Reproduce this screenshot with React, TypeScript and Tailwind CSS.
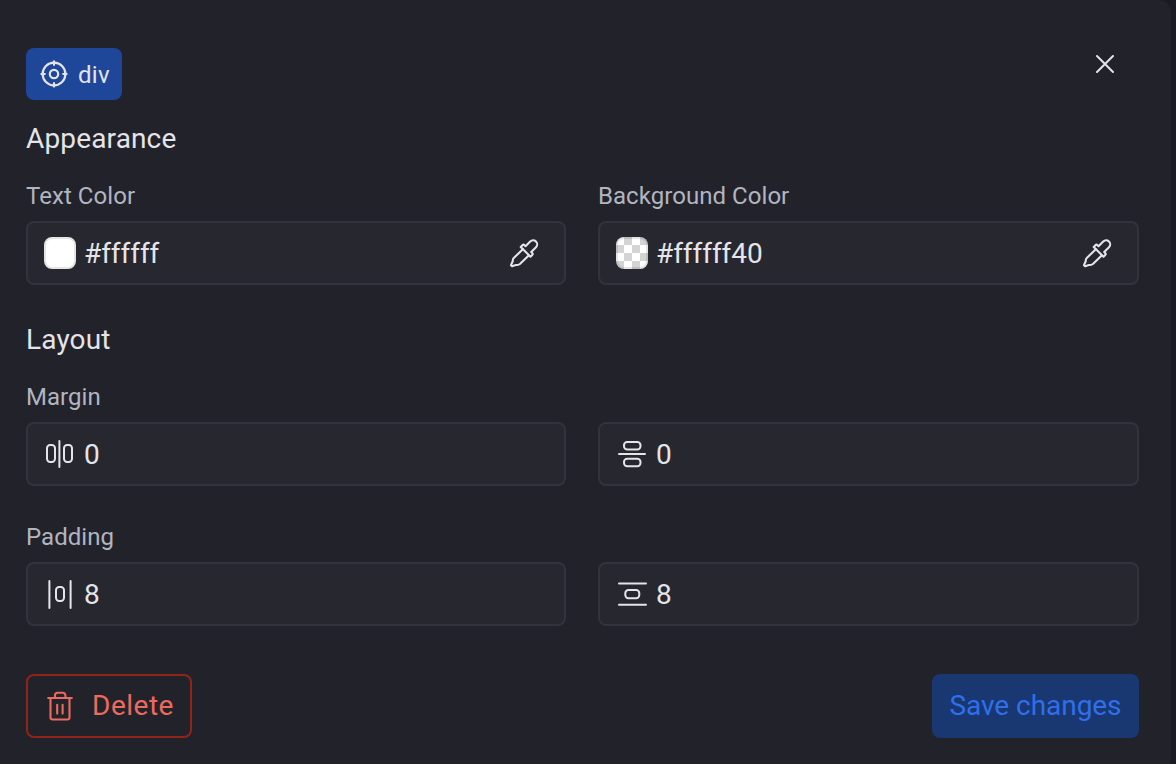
import React from "react";

const line = { fill: "none", stroke: "currentColor", strokeWidth: 2, strokeLinecap: "round" as const, strokeLinejoin: "round" as const };

const Target = () => (
  <svg width="28" height="28" viewBox="0 0 28 28" {...line} strokeWidth={2.2}>
    <circle cx="14" cy="14" r="11.4" />
    <circle cx="14" cy="14" r="4.2" />
    <path d="M14 1.4v3.4M14 23.2v3.4M1.4 14h3.4M23.2 14h3.4" />
  </svg>
);
const Close = () => (
  <svg width="32" height="32" viewBox="0 0 32 32" {...line}>
    <path d="M8 8l16 16M24 8l-16 16" />
  </svg>
);
const Dropper = () => (
  <svg width="32" height="32" viewBox="0 0 32 32" {...line} strokeWidth={2.1}>
    <path d="M13 10.5l9 9 1.7-1.7a1.5 1.5 0 0 0 0-2.1l-1-1 4.8-4.7a4 4 0 0 0-5.8-5.7L17 9l-1-1a1.5 1.5 0 0 0-2.1 0l-1.7 1.7z" transform="translate(.5 .2)" />
    <path d="M14.8 12.2L6 20.8a3.6 3.6 0 0 0-1.2 3.2L3 28.2l1.1 1.1 3.8-1.3a6 6 0 0 0 4-1l8.8-8.6" />
  </svg>
);
const MarginX = () => (
  <svg width="32" height="32" viewBox="0 0 32 32" {...line}>
    <rect x="3" y="7" width="8" height="17" rx="3.2" />
    <rect x="20" y="7" width="8" height="17" rx="3.2" />
    <path d="M15.4 3v26" />
  </svg>
);
const MarginY = () => (
  <svg width="32" height="32" viewBox="0 0 32 32" {...line}>
    <rect x="8" y="4" width="16.5" height="7.5" rx="3.2" />
    <rect x="8" y="20.8" width="16.5" height="7.5" rx="3.2" />
    <path d="M3 16h26" />
  </svg>
);
const PaddingX = () => (
  <svg width="32" height="32" viewBox="0 0 32 32" {...line}>
    <rect x="12" y="9" width="8" height="14" rx="3.2" />
    <path d="M5.4 3v27M26.6 3v27" />
  </svg>
);
const PaddingY = () => (
  <svg width="32" height="32" viewBox="0 0 32 32" {...line}>
    <rect x="9.3" y="12" width="14" height="8.2" rx="3.2" />
    <path d="M3 5.4h27M3 26.8h27" />
  </svg>
);
const Trash = () => (
  <svg width="32" height="32" viewBox="0 0 32 32" {...line} strokeWidth={2.1}>
    <path d="M4.2 8h23.6M6.5 8v19.5a2 2 0 0 0 2 2h15a2 2 0 0 0 2-2V8M11 8V5.3a2.5 2.5 0 0 1 2.5-2.5h5.4a2.5 2.5 0 0 1 2.5 2.5V8M13.2 14.8v8.8M18.6 14.8v8.8" />
  </svg>
);

type FieldProps = { icon: React.ReactNode; value: string; picker?: boolean };

const Field = ({ icon, value, picker }: FieldProps) => (
  <div className="flex h-16 items-center rounded-lg border-2 border-[#33333d] bg-[#27272f] pr-6 pl-4 text-[#e4e4e9]">
    {icon}
    <span className="ml-2 flex-1 pt-0.5 text-[28px] leading-8 tracking-[-0.05px]">{value}</span>
    {picker && <Dropper />}
  </div>
);
const Label = ({ children }: { children: React.ReactNode }) => (
  <div className="mb-[9px] h-8 text-2xl leading-8 tracking-[0.05px] text-[#b1b5c0]">{children}</div>
);
const Heading = ({ children }: { children: React.ReactNode }) => (
  <h2 className="h-9 pt-px text-[28px] leading-9 tracking-[0.15px] text-[#e4e4e9]">{children}</h2>
);
const Row = ({ children }: { children: React.ReactNode }) => (
  <div className="grid grid-cols-[540px_541px] gap-8">{children}</div>
);

export default function App() {
  return (
    <div className="h-[764px] w-[1176px] overflow-hidden bg-[#1b1b23] font-['Roboto',sans-serif]">
      <div className="h-[770px] w-[1171px] rounded-r-xl bg-[#22222a] pt-12 pr-8 pl-[26px]">
        <div className="flex h-[52px] items-start justify-between">
          <div className="flex h-[52px] w-24 items-center gap-[10px] rounded-lg bg-[#1e4799] pl-[14px] text-2xl tracking-[0.3px] text-[#e4e4e9]">
            <Target />
            <span className="pt-0.5">div</span>
          </div>
          <button className="mr-[18px] text-[#e4e4e9]" aria-label="Close"><Close /></button>
        </div>
        <div className="mt-5 mb-6"><Heading>Appearance</Heading></div>
        <Row>
          <div>
            <Label>Text Color</Label>
            <Field picker value="#ffffff" icon={<span className="size-8 rounded-lg border-2 border-[#e5e5e5] bg-white" />} />
          </div>
          <div>
            <Label>Background Color</Label>
            <Field
              picker
              value="#ffffff40"
              icon={<span className="size-8 rounded-lg bg-[repeating-conic-gradient(#d4d4d4_0_25%,#ffffff_0_50%)] bg-[length:16px_16px] shadow-[inset_0_0_0_2px_rgba(0,0,0,0.1)]" />}
            />
          </div>
        </Row>
        <div className="mt-9 mb-6"><Heading>Layout</Heading></div>
        <Label>Margin</Label>
        <Row>
          <Field icon={<MarginX />} value="0" />
          <Field icon={<MarginY />} value="0" />
        </Row>
        <div className="mt-[35px]">
          <Label>Padding</Label>
          <Row>
            <Field icon={<PaddingX />} value="8" />
            <Field icon={<PaddingY />} value="8" />
          </Row>
        </div>
        <div className="mt-12 flex justify-between text-[28px] leading-8">
          <button className="flex h-16 w-[166px] items-center gap-4 rounded-lg border-2 border-[#922318] pl-4 tracking-[0.5px] text-[#ec6a5e]">
            <Trash />
            <span>Delete</span>
          </button>
          <button className="flex h-16 w-[207px] items-center justify-center rounded-lg bg-[#193771] tracking-[-0.05px] text-[#2f6feb]">
            Save changes
          </button>
        </div>
      </div>
    </div>
  );
}
